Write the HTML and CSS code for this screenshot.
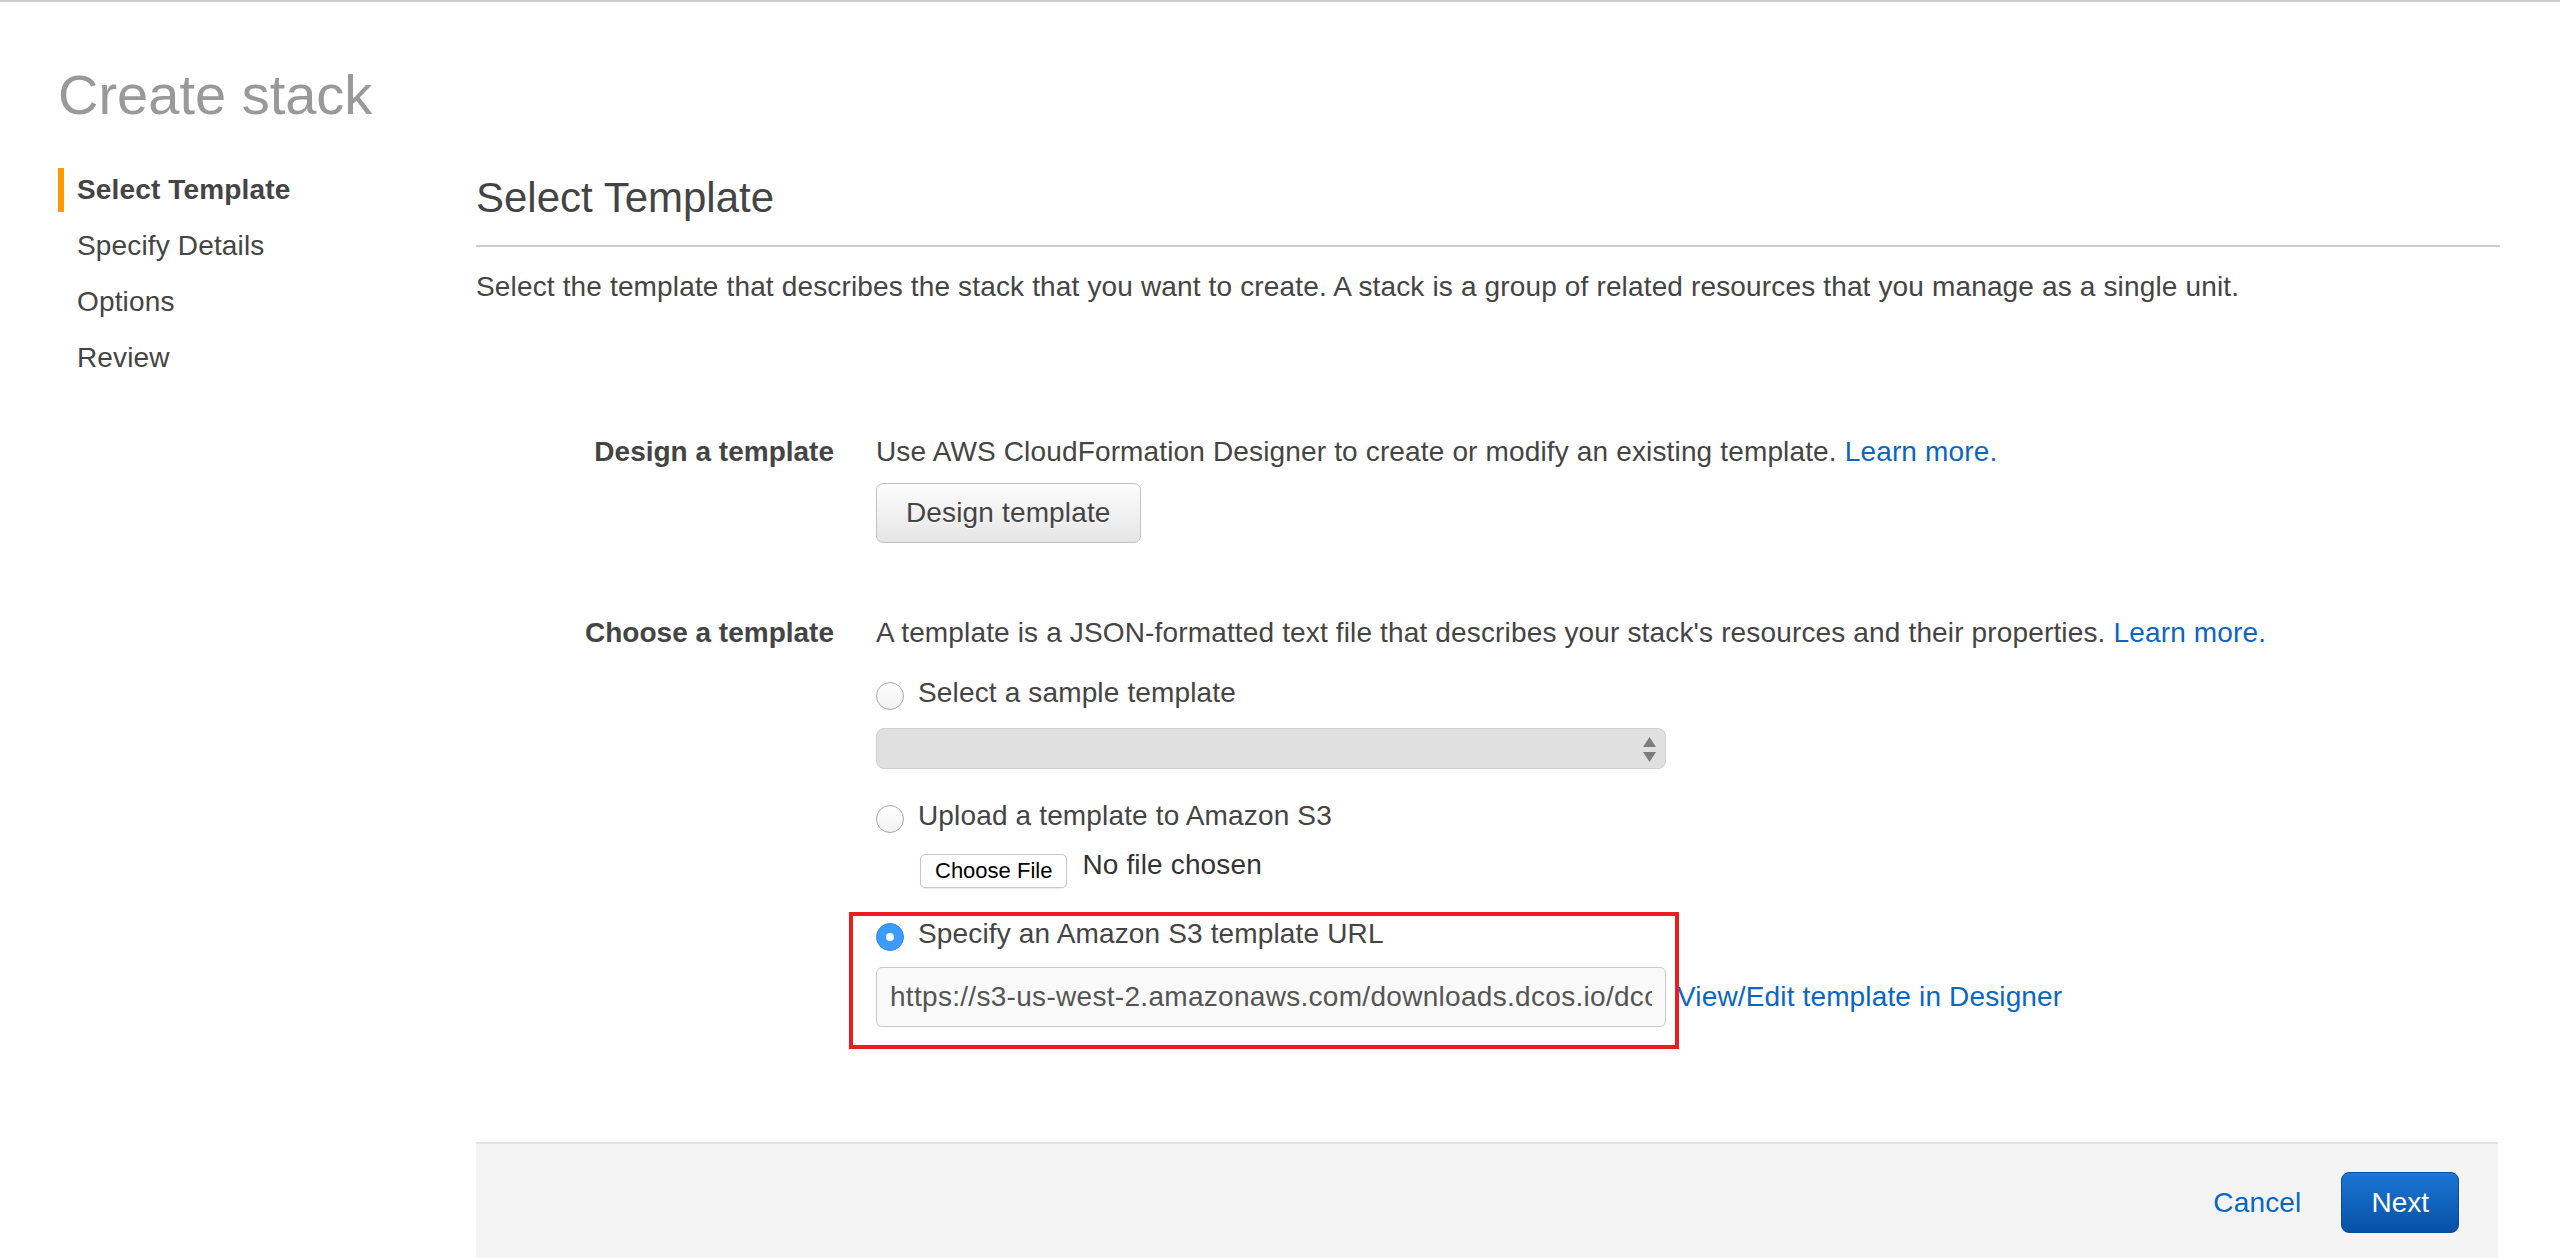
FILE: index.html
```html
<!DOCTYPE html>
<html lang="en">
<head>
<meta charset="utf-8">
<title>Create stack</title>
<link rel="stylesheet" href="styles.css">
</head>
<body>
<div class="page">
  <h1 class="title">Create stack</h1>
  <div class="layout">
    <nav class="nav">
      <div class="nav-item active">Select Template</div>
      <div class="nav-item">Specify Details</div>
      <div class="nav-item">Options</div>
      <div class="nav-item">Review</div>
    </nav>
    <main class="main">
      <h2 class="heading">Select Template</h2>
      <p class="intro">Select the template that describes the stack that you want to create. A stack is a group of related resources that you manage as a single unit.</p>

      <div class="form">
        <div class="form-row">
          <div class="label">Design a template</div>
          <div class="value">
            <div class="line">Use AWS CloudFormation Designer to create or modify an existing template. <a class="link">Learn more.</a></div>
            <button class="btn-design" type="button">Design template</button>
          </div>
        </div>

        <div class="form-row row-choose">
          <div class="label">Choose a template</div>
          <div class="value">
            <div class="line">A template is a JSON-formatted text file that describes your stack's resources and their properties. <a class="link">Learn more.</a></div>

            <div class="radio-row first">
              <span class="radio"></span>
              <span class="line">Select a sample template</span>
            </div>
            <div class="select">
              <svg width="13" height="25" viewBox="0 0 13 25"><path d="M6.5 0 L13 10 L0 10 Z M0 15 L13 15 L6.5 25 Z" fill="#7d7d7d"/></svg>
            </div>

            <div class="radio-row second">
              <span class="radio"></span>
              <span class="line">Upload a template to Amazon S3</span>
            </div>
            <div class="file-row">
              <button class="btn-file" type="button">Choose File</button>
              <span class="line">No file chosen</span>
            </div>

            <div class="url-option">
              <div class="radio-row">
                <span class="radio checked"></span>
                <span class="line">Specify an Amazon S3 template URL</span>
              </div>
              <div class="url-row">
                <input class="url-input" type="text" value="https://s3-us-west-2.amazonaws.com/downloads.dcos.io/dcos/stable/aws/single-master.cloudformation.json">
                <a class="link designer-link">View/Edit template in Designer</a>
              </div>
            </div>
          </div>
        </div>
      </div>

      <footer class="footer">
        <a class="link cancel">Cancel</a>
        <button class="btn-next" type="button">Next</button>
      </footer>
    </main>
  </div>
</div>
</body>
</html>
```
FILE: styles.css
```css
html, body {
  margin: 0;
  padding: 0;
  background: #ffffff;
}

body {
  font-family: "Liberation Sans", Arial, Helvetica, sans-serif;
  color: #444444;
  font-size: 28px;
  line-height: 36px;
  letter-spacing: 0.15px;
  overflow: hidden;
}

.page {
  border-top: 2px solid #cfcfcf;
  padding: 0 60px 0 58px;
}

.title {
  margin: 0;
  padding-top: 61px;
  font-size: 56px;
  line-height: 64px;
  font-weight: normal;
  letter-spacing: 0;
  color: #999999;
}

.layout {
  display: flex;
}

.nav {
  width: 418px;
  flex: none;
  padding-top: 41px;
}

.nav-item {
  font-size: 28px;
  line-height: 44px;
  height: 44px;
  border-left: 6px solid transparent;
  padding-left: 13px;
  margin-bottom: 12px;
  color: #444444;
}

.nav-item.active {
  border-left-color: #ff9900;
  font-weight: bold;
}

.main {
  flex: 1;
  min-width: 0;
  padding-top: 47px;
}

.heading {
  margin: 0;
  font-size: 42px;
  line-height: 48px;
  font-weight: normal;
  letter-spacing: 0;
  color: #444444;
  padding-bottom: 23px;
  border-bottom: 2px solid #cccccc;
}

.intro {
  margin: 22px 0 0;
  line-height: 36px;
}

.form {
  margin-top: 129px;
}

.form-row {
  display: grid;
  grid-template-columns: 358px 1fr;
  column-gap: 42px;
}

.row-choose {
  margin-top: 72px;
}

.label {
  text-align: right;
  font-weight: bold;
  line-height: 36px;
  letter-spacing: 0;
}

.line {
  line-height: 36px;
}

.link {
  color: #0b66c2;
  text-decoration: none;
  cursor: pointer;
}

.btn-design {
  display: block;
  margin-top: 13px;
  height: 60px;
  padding: 0 29px;
  font-family: inherit;
  font-size: 28px;
  letter-spacing: 0.15px;
  color: #444444;
  border: 1px solid #c2c2c2;
  border-radius: 7px;
  background: linear-gradient(#fdfdfd, #e5e5e5);
  text-shadow: 0 1px 0 #ffffff;
  box-shadow: inset 0 1px 0 #ffffff;
}

.radio-row {
  display: flex;
  align-items: flex-start;
  gap: 14px;
}

.radio-row.first {
  margin-top: 24px;
}

.radio-row.second {
  margin-top: 29px;
}

.radio {
  flex: none;
  width: 28px;
  height: 28px;
  margin-top: 7px;
  box-sizing: border-box;
  border-radius: 50%;
  border: 1px solid #a8a8a8;
  background: linear-gradient(#ffffff, #f1f1f1);
  position: relative;
}

.radio.checked {
  background: #3d9bfc;
  border-color: #2d88e9;
}

.radio.checked::after {
  content: "";
  position: absolute;
  left: 9px;
  top: 9px;
  width: 8px;
  height: 8px;
  border-radius: 50%;
  background: #ffffff;
}

.select {
  margin-top: 17px;
  width: 790px;
  height: 41px;
  box-sizing: border-box;
  border: 1px solid #d0d0d0;
  border-radius: 8px;
  background: #e0e0e0;
  display: flex;
  justify-content: flex-end;
  align-items: center;
  padding-right: 9px;
}

.select svg {
  display: block;
  margin-top: 2px;
}

.file-row {
  display: flex;
  align-items: flex-start;
  gap: 15px;
  margin-top: 13px;
  padding-left: 44px;
}

.btn-file {
  margin-top: 7px;
  height: 34px;
  padding: 0 14px;
  font-family: inherit;
  font-size: 22px;
  color: #000000;
  background: #ffffff;
  border: 1px solid #c8c8c8;
  border-radius: 5px;
  box-shadow: 0 1px 1px rgba(0, 0, 0, 0.08);
}

.file-row .line {
  color: #333333;
}

.url-option {
  position: relative;
  margin-top: 28px;
}

.url-option::after {
  content: "";
  position: absolute;
  left: -27px;
  top: -4px;
  width: 830px;
  height: 137px;
  box-sizing: border-box;
  border: 4px solid #ec1c24;
  pointer-events: none;
}

.url-row {
  display: flex;
  align-items: center;
  margin-top: 15px;
}

.url-input {
  width: 790px;
  height: 60px;
  box-sizing: border-box;
  border: 1px solid #c9c9c9;
  border-radius: 6px;
  background: #f9f9f9;
  padding: 0 13px;
  font-family: inherit;
  font-size: 28px;
  letter-spacing: 0.3px;
  color: #555555;
  outline: none;
}

.designer-link {
  margin-left: 11px;
  line-height: 36px;
}

.footer {
  margin-top: 115px;
  margin-right: 2px;
  border-top: 2px solid #e2e2e2;
  background: #f4f4f4;
  display: flex;
  justify-content: flex-end;
  align-items: center;
  gap: 40px;
  padding: 28px 39px 25px;
}

.cancel {
  line-height: 36px;
}

.btn-next {
  height: 61px;
  padding: 0 29px;
  font-family: inherit;
  font-size: 28px;
  color: #ffffff;
  border: 1px solid #0b4d9c;
  border-radius: 8px;
  background: linear-gradient(#1b76d4, #0850a6);
}
```
